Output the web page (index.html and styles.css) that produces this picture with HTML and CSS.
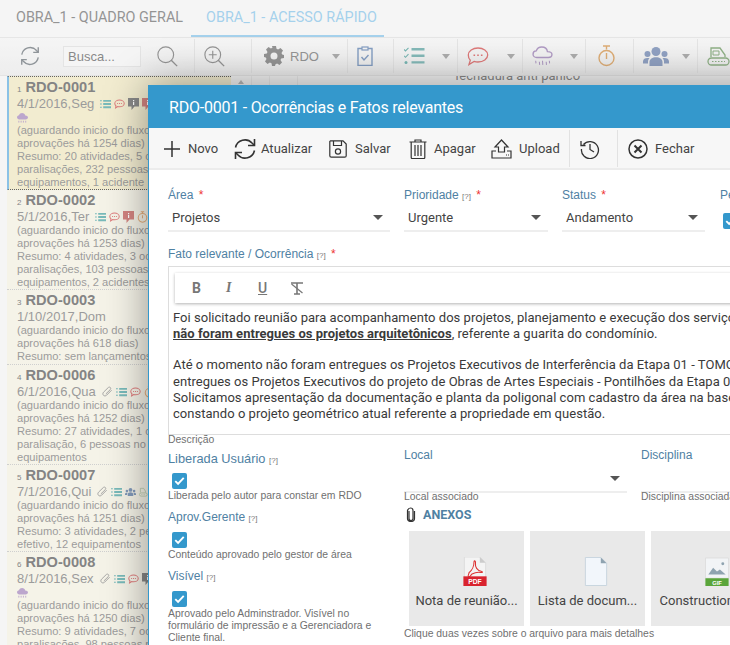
FILE: index.html
```html
<!DOCTYPE html>
<html lang="pt">
<head>
<meta charset="utf-8">
<title>RDO-0001</title>
<link rel="stylesheet" href="styles.css">
</head>
<body>
<svg class="defs" width="0" height="0">
  <symbol id="i-list" viewBox="0 0 12 10"><path d="M0 1h2v1H0zM0 4.500h2v1H0zM0 8h2v1H0z" fill="#3e9c9d"/><path d="M3.500.5H12v2H3.500zM3.500 4H12v2H3.500zM3.500 7.500H12v2H3.500z" fill="#3e9c9d"/></symbol>
  <symbol id="i-chat" viewBox="0 0 14 12"><path d="M7 1c3.300 0 6 1.900 6 4.300S10.300 9.600 7 9.600c-.8 0-1.600-.1-2.300-.3L2 11l.5-2.700C1.600 7.500 1 6.500 1 5.300 1 2.900 3.700 1 7 1z" fill="none" stroke="#d04545" stroke-width="1.300"/><path d="M4 4.800h1.200V6H4zM6.400 4.800h1.200V6H6.400zM8.800 4.800H10V6H8.800z" fill="#d04545"/></symbol>
  <symbol id="i-note" viewBox="0 0 11 12"><path d="M0 0h11v8.500H6.500L3.500 12V8.500H0z" fill="currentColor"/><path d="M5 2h1.200v1.200H5zM5 4h1.200v3H5z" fill="#fff"/></symbol>
  <symbol id="i-timer" viewBox="0 0 12 14"><path d="M4 .8h4M6 .8v2.400" stroke="#d88c45" fill="none" stroke-width="1.200"/><circle cx="6" cy="8" r="5" fill="none" stroke="#d88c45" stroke-width="1.200"/><path d="M6 5v3.500" stroke="#d88c45" stroke-width="1.200"/></symbol>
  <symbol id="i-cloud" viewBox="0 0 12 11"><path d="M2.500 7C1.100 7 0 6 0 4.700s1-2.200 2.200-2.300C2.700 1 4 0 5.500 0c1.800 0 3.200 1.200 3.500 2.700 1.700 0 3 1 3 2.200S10.800 7 9.500 7z" fill="#a080b8"/><path d="M2 8.500v2M4.500 8.500v2M7 8.500v2M9.500 8.500v2" stroke="#a080b8" fill="none"/></symbol>
  <symbol id="i-clip" viewBox="0 0 12 12"><path d="M10.500 4 5 9.500c-1 1-2.500 1-3.400.1s-.9-2.400.1-3.400L6.800 1.200c.7-.7 1.700-.7 2.300-.1s.6 1.600-.1 2.300L4.200 8.100" fill="none" stroke="#777" stroke-width="1"/></symbol>
  <symbol id="i-users" viewBox="0 0 26 19"><circle cx="13" cy="4.500" r="4.500" fill="currentColor"/><circle cx="4.500" cy="7" r="3" fill="currentColor"/><circle cx="21.500" cy="7" r="3" fill="currentColor"/><path d="M6.500 19v-4c0-3 3-4.800 6.500-4.800s6.500 1.800 6.500 4.800v4zM0 16.500v-2C0 12 2 11 4.500 11c.8 0 1.300.1 2 .3-1 .9-1.500 2-1.500 3.400v1.800zM26 16.500v-2C26 12 24 11 21.500 11c-.8 0-1.300.1-2 .3 1 .9 1.500 2 1.500 3.400v1.800z" fill="currentColor"/></symbol>
  <symbol id="i-dozer" viewBox="0 0 24 20"><path d="M3 11V2h7l4 6v3" fill="none" stroke="#6f9a62" stroke-width="1.200"/><rect x="1" y="12" width="17" height="7" rx="3.500" fill="none" stroke="#6f9a62" stroke-width="1.200"/><path d="M5 15.500h9" stroke="#6f9a62" stroke-dasharray="1.500 1.500"/></symbol>
</svg>

<div class="app">
  <nav class="tabs">
    <span class="tab">OBRA_1 - QUADRO GERAL</span>
    <span class="tab active">OBRA_1 - ACESSO RÁPIDO</span>
  </nav>
  <div class="toolbar">
    <div class="cell c-search">
      <svg class="refresh" viewBox="0 0 24 24"><path d="M3 10.500A9.200 9.200 0 0 1 19 6l2 2M21 13.500A9.200 9.200 0 0 1 5 18l-2-2" fill="none" stroke="#5f676e" stroke-width="1.500"/><path d="M21 2.500V8h-5.500M3 21.500V16h5.500" fill="none" stroke="#5f676e" stroke-width="1.500"/></svg>
      <input class="search" placeholder="Busca..." readonly>
      <svg class="lens" viewBox="0 0 24 24"><circle cx="10" cy="10" r="9" fill="none" stroke="#666" stroke-width="1.300"/><path d="m16 16 7 7" stroke="#666" stroke-width="1.600"/></svg>
    </div>
    <div class="cell c-zoom">
      <svg class="lens" viewBox="0 0 24 24"><circle cx="10" cy="10" r="9" fill="none" stroke="#666" stroke-width="1.300"/><path d="m16 16 7 7" stroke="#666" stroke-width="1.600"/><path d="M10 5.500v9M5.500 10h9" stroke="#666" stroke-width="1.300"/></svg>
    </div>
    <div class="cell c-rdo">
      <svg class="gear" viewBox="0 0 20 20"><path fill="#666" fill-rule="evenodd" d="M8 0h4l.5 2.800 1.600.7L16.500 2 19 4.500l-1.500 2.400.7 1.600L20 9v3l-2.800.5-.7 1.600 1.500 2.400-2.500 2.500-2.400-1.500-1.600.7L11 20H8l-.5-2.800-1.600-.7L3.500 18 1 15.500l1.500-2.400-.7-1.600L0 11V8l2.800-.5.7-1.600L2 3.500 4.500 1l2.400 1.500 1.600-.7zM10 6.500a3.500 3.500 0 1 0 0 7 3.500 3.500 0 0 0 0-7z"/></svg>
      <span class="rdo">RDO</span><i class="caret"></i>
    </div>
    <div class="cell c-clip">
      <svg class="board" viewBox="0 0 16 20"><path d="M5 2.500H1v17h14v-17h-4" fill="none" stroke="#4f74a8" stroke-width="1.400"/><rect x="5" y="1" width="6" height="3" fill="none" stroke="#4f74a8" stroke-width="1.200"/><path d="m4.500 11 2.500 3 4.500-5" fill="none" stroke="#4f74a8" stroke-width="1.400"/></svg>
    </div>
    <div class="cell c-w64">
      <svg class="check" viewBox="0 0 21 18"><path d="M0 2.500 1.500 4 4.500.8M0 8.800l1.500 1.500 3-3.200" fill="none" stroke="#3e9792" stroke-width="1.100"/><circle cx="2" cy="15.500" r="1.500" fill="#3e9792"/><path d="M7.500 1h13v2.400h-13zM7.500 7.600h13V10h-13zM7.500 14.200h13v2.400h-13z" fill="#4f9b9a"/></svg>
      <i class="caret"></i>
    </div>
    <div class="cell c-w65">
      <svg class="chat" viewBox="0 0 22 19"><path d="M11 1c5.300 0 9.700 3 9.700 7s-4.400 7-9.700 7c-1.400 0-2.700-.2-3.900-.6L2 17.500l1.300-4.300C2 12 1.300 10.100 1.300 8 1.300 4 5.700 1 11 1z" fill="none" stroke="#cf4040" stroke-width="1.300"/><path d="M6.500 7.400h1.600V9H6.500zM10.200 7.400h1.600V9h-1.600zM13.900 7.400h1.600V9h-1.600z" fill="#cf4040"/></svg>
      <i class="caret"></i>
    </div>
    <div class="cell c-w63">
      <svg class="rain" viewBox="0 0 20 20"><path d="M4.500 11C2.500 11 1 9.600 1 7.800S2.500 4.800 4 4.700C4.800 2.500 6.800 1 9.300 1c2.800 0 5 1.900 5.400 4.300 2.500 0 4.300 1.200 4.300 2.900S17.400 11 15.500 11z" fill="none" stroke="#8f70ab" stroke-width="1.300"/><path d="m3.500 14 .3 2.500M7 15l.3 3M10 14l.3 4M13.500 15l.3 3M16.500 14l.3 2.500" fill="none" stroke="#8f70ab"/></svg>
      <i class="caret"></i>
    </div>
    <div class="cell c-w48">
      <svg class="timer" viewBox="0 0 17 22"><path d="M5 1h7M8.500 1v3.500" stroke="#d08a3a" stroke-width="1.400" fill="none"/><circle cx="8.500" cy="13" r="7.500" fill="none" stroke="#d08a3a" stroke-width="1.400"/><path d="M8.500 8v6" stroke="#d08a3a" stroke-width="1.400"/></svg>
    </div>
    <div class="cell c-w64b">
      <svg class="users"><use href="#i-users"/></svg>
      <i class="caret"></i>
    </div>
    <div class="cell c-last">
      <svg class="dozer" viewBox="0 0 34 20"><path d="M4 11V2h9l5 7v2" fill="none" stroke="#5f8f52" stroke-width="1.300"/><path d="M6 5h6v4H6z" fill="none" stroke="#5f8f52"/><rect x="1" y="12" width="21" height="7" rx="3.500" fill="none" stroke="#5f8f52" stroke-width="1.300"/><path d="M5 15.500h13" stroke="#5f8f52" stroke-dasharray="1.500 1.500"/><path d="M24 5c3 0 6 1 7 3v10h-3" fill="none" stroke="#5f8f52" stroke-width="1.300"/></svg>
    </div>
  </div>

  <div class="workspace">
    <aside class="list">
      <article class="row selected">
        <h3><small>1</small> RDO-0001</h3>
        <p class="date">4/1/2016,Seg
          <svg class="ri"><use href="#i-list"/></svg>
          <svg class="ri"><use href="#i-chat"/></svg>
          <svg class="ri note-g"><use href="#i-note"/></svg>
          <svg class="ri note-r"><use href="#i-note"/></svg>
        </p>
        <p class="icons"><svg class="ri"><use href="#i-cloud"/></svg></p>
        <p>(aguardando inicio do fluxo de</p>
        <p>aprovações há 1254 dias)</p>
        <p>Resumo: 20 atividades, 5 ocorrências,</p>
        <p>paralisações, 232 pessoas no efetivo,</p>
        <p>equipamentos, 1 acidente</p>
      </article>
      <article class="row">
        <h3><small>2</small> RDO-0002</h3>
        <p class="date">5/1/2016,Ter
          <svg class="ri"><use href="#i-list"/></svg>
          <svg class="ri"><use href="#i-chat"/></svg>
          <svg class="ri note-r"><use href="#i-note"/></svg>
          <svg class="ri"><use href="#i-timer"/></svg>
        </p>
        <p>(aguardando inicio do fluxo de</p>
        <p>aprovações há 1253 dias)</p>
        <p>Resumo: 4 atividades, 3 ocorrências,</p>
        <p>paralisações, 103 pessoas no efetivo,</p>
        <p>equipamentos, 2 acidentes</p>
      </article>
      <article class="row row-short">
        <h3><small>3</small> RDO-0003</h3>
        <p class="date">1/10/2017,Dom</p>
        <p>(aguardando inicio do fluxo de</p>
        <p>aprovações há 618 dias)</p>
        <p>Resumo: sem lançamentos</p>
      </article>
      <article class="row">
        <h3><small>4</small> RDO-0006</h3>
        <p class="date">6/1/2016,Qua
          <svg class="ri"><use href="#i-clip"/></svg>
          <svg class="ri"><use href="#i-list"/></svg>
          <svg class="ri"><use href="#i-chat"/></svg>
          <svg class="ri"><use href="#i-timer"/></svg>
        </p>
        <p>(aguardando inicio do fluxo de</p>
        <p>aprovações há 1252 dias)</p>
        <p>Resumo: 27 atividades, 1 ocorrência,</p>
        <p>paralisação, 6 pessoas no efetivo,</p>
        <p>equipamentos</p>
      </article>
      <article class="row">
        <h3><small>5</small> RDO-0007</h3>
        <p class="date">7/1/2016,Qui
          <svg class="ri"><use href="#i-clip"/></svg>
          <svg class="ri"><use href="#i-list"/></svg>
          <svg class="ri u-b"><use href="#i-users"/></svg>
          <svg class="ri"><use href="#i-dozer"/></svg>
        </p>
        <p>(aguardando inicio do fluxo de</p>
        <p>aprovações há 1251 dias)</p>
        <p>Resumo: 3 atividades, 2 pessoas no</p>
        <p>efetivo, 12 equipamentos</p>
      </article>
      <article class="row">
        <h3><small>6</small> RDO-0008</h3>
        <p class="date">8/1/2016,Sex
          <svg class="ri"><use href="#i-clip"/></svg>
          <svg class="ri"><use href="#i-list"/></svg>
          <svg class="ri"><use href="#i-chat"/></svg>
          <svg class="ri note-g"><use href="#i-note"/></svg>
        </p>
        <p class="icons"><svg class="ri"><use href="#i-cloud"/></svg></p>
        <p>(aguardando inicio do fluxo de</p>
        <p>aprovações há 1250 dias)</p>
        <p>Resumo: 9 atividades, 7 ocorrências,</p>
        <p>paralisações, 98 pessoas no efetivo</p>
      </article>
    </aside>
    <div class="grip">
      <i class="grip-up"></i>
    </div>
    <main class="detail">
      <div class="col col-a"></div>
      <div class="col col-b"></div>
      <div class="col col-c"><p class="behind">fechadura anti pânico</p></div>
    </main>
  </div>
</div>

<div class="scrim"></div>

<section class="modal">
  <header class="m-head">RDO-0001 - Ocorrências e Fatos relevantes</header>
  <div class="m-tools">
    <button class="tool t-novo"><svg viewBox="0 0 16 16"><path d="M8 0v16M0 8h16" stroke="#333" stroke-width="1.500" fill="none"/></svg>Novo</button>
    <button class="tool t-atu"><svg viewBox="0 0 22 22"><path d="M1.500 9.500A9.700 9.700 0 0 1 18 5l2 2M20.500 12.500A9.700 9.700 0 0 1 4 17l-2-2" fill="none" stroke="#333" stroke-width="1.600"/><path d="M20.500 1v6.500H14M1.500 21v-6.500H8" fill="none" stroke="#333" stroke-width="1.600"/></svg>Atualizar</button>
    <button class="tool t-sal"><svg viewBox="0 0 18 18"><path d="M1.500.8h12.500L17.200 4v11.700c0 .8-.7 1.500-1.500 1.500H2.300c-.8 0-1.500-.7-1.500-1.500V1.500z" fill="none" stroke="#333" stroke-width="1.200"/><path d="M4.500 1v4.500h8V1" fill="none" stroke="#333" stroke-width="1.200"/><circle cx="9" cy="11.500" r="2.600" fill="none" stroke="#333" stroke-width="1.200"/></svg>Salvar</button>
    <button class="tool t-apa"><svg class="bin" viewBox="0 0 18 20"><path d="M.5 3h17M6 3V1h6v2M2.200 3v15.500c0 .5.400 1 1 1h11.600c.6 0 1-.5 1-1V3M6 6v11M9 6v11M12 6v11" fill="none" stroke="#333" stroke-width="1.200"/></svg>Apagar</button>
    <button class="tool t-upl"><svg class="upl" viewBox="0 0 21 20"><path d="M10.500 1 4 8h3.500v5h6V8H17zM5 12H1v7h19v-7h-4" fill="none" stroke="#333" stroke-width="1.200"/><path d="M15 16h1M17 16h1" stroke="#333"/></svg>Upload</button>
    <button class="tool t-his"><svg class="his" viewBox="0 0 20 20"><path d="M3.500 5.500A8.500 8.500 0 1 1 1.500 10M1 2v4.500h4.500" fill="none" stroke="#333" stroke-width="1.300"/><path d="M10 5v5.500l4 2.500" fill="none" stroke="#333" stroke-width="1.300"/></svg></button>
    <button class="tool t-fec"><svg class="fec" viewBox="0 0 20 20"><circle cx="10" cy="10" r="9" fill="none" stroke="#333" stroke-width="1.500"/><path d="m6.500 6.500 7 7M13.500 6.500l-7 7" stroke="#333" stroke-width="2"/></svg>Fechar</button>
  </div>

  <div class="m-body">
    <div class="fields">
      <div class="field f-area">
        <label>Área <b>*</b></label>
        <div class="select"><span>Projetos</span><i class="arrow"></i></div>
      </div>
      <div class="field f-pri">
        <label>Prioridade <em>[?]</em> <b>*</b></label>
        <div class="select"><span>Urgente</span><i class="arrow"></i></div>
      </div>
      <div class="field f-sta">
        <label>Status <b>*</b></label>
        <div class="select"><span>Andamento</span><i class="arrow"></i></div>
      </div>
      <div class="field f-pen">
        <label>Pendente</label>
        <span class="cb"><svg viewBox="0 0 16 16"><path d="m3.500 8.200 3 3 6-6.500" fill="none" stroke="#fff" stroke-width="2"/></svg></span>
      </div>
    </div>

    <label class="l-fato">Fato relevante / Ocorrência <em>[?]</em> <b>*</b></label>
    <div class="editor">
      <div class="e-tools">
        <span class="e-b">B</span><span class="e-i">I</span><span class="e-u">U</span>
        <svg class="e-x" viewBox="0 0 14 13"><path d="M1 1h12M7 1v11M4 12h6" fill="none" stroke="#777" stroke-width="1.600"/><path d="m1.500 2 11 9" stroke="#777" stroke-width="1.200"/></svg>
      </div>
      <div class="e-text">
        <p>Foi solicitado reunião para acompanhamento dos projetos, planejamento e execução dos serviços</p>
        <p class="gap"><strong>não foram entregues os projetos arquitetônicos</strong>, referente a guarita do condomínio.</p>
        <p>Até o momento não foram entregues os Projetos Executivos de Interferência da Etapa 01 - TOMO</p>
        <p>entregues os Projetos Executivos do projeto de Obras de Artes Especiais - Pontilhões da Etapa 01</p>
        <p>Solicitamos apresentação da documentação e planta da poligonal com cadastro da área na base</p>
        <p>constando o projeto geométrico atual referente a propriedade em questão.</p>
      </div>
    </div>
    <div class="hint desc">Descrição</div>

    <div class="lower">
      <div class="checks">
        <div class="chk chk-first">
          <label>Liberada Usuário <em>[?]</em></label>
          <span class="cb"><svg viewBox="0 0 16 16"><path d="m3.500 8.200 3 3 6-6.500" fill="none" stroke="#fff" stroke-width="2"/></svg></span>
          <div class="hint">Liberada pelo autor para constar em RDO</div>
        </div>
        <div class="chk">
          <label>Aprov.Gerente <em>[?]</em></label>
          <span class="cb"><svg viewBox="0 0 16 16"><path d="m3.500 8.200 3 3 6-6.500" fill="none" stroke="#fff" stroke-width="2"/></svg></span>
          <div class="hint">Conteúdo aprovado pelo gestor de área</div>
        </div>
        <div class="chk">
          <label>Visível <em>[?]</em></label>
          <span class="cb"><svg viewBox="0 0 16 16"><path d="m3.500 8.200 3 3 6-6.500" fill="none" stroke="#fff" stroke-width="2"/></svg></span>
          <div class="hint">Aprovado pelo Adminstrador. Visível no formulário de impressão e a Gerenciadora e Cliente final.</div>
        </div>
      </div>
      <div class="attach">
        <div class="pair">
          <div class="field f-local">
            <label>Local</label>
            <div class="select"><span></span><i class="arrow"></i></div>
            <div class="hint">Local associado</div>
          </div>
          <div class="field f-disc">
            <label>Disciplina</label>
            <div class="select"><span></span></div>
            <div class="hint">Disciplina associada</div>
          </div>
        </div>
        <h4 class="anexos"><svg viewBox="0 0 10 15"><path d="M3 4v7.500c0 1.100.9 2 2 2s2-.9 2-2V3.500C7 2 6 1 4.500 1S2 2 1.500 3.500v8c0 2 1.500 3 3.500 3s3.500-1 3.500-3V4" fill="none" stroke="#333" stroke-width="1.200"/></svg>ANEXOS</h4>
        <div class="cards">
          <div class="card">
            <svg class="doc" viewBox="0 0 24 30"><path d="M1 0h16l6 6v24H1z" fill="#f4f4f4" stroke="#ddd"/><path d="M17 0v6h6z" fill="#ccc"/><path d="M6 16c3-2 5-7 5-11 0-2 2-1 1.500 2C12 10 14 14 19 15c1 .2 1 1.500-1 1-3-.5-6 0-9 1.500-2 2-3 4-4 2.500-.5-1 1-3 1-4.500z" fill="none" stroke="#d33" stroke-width="1.100"/><rect x="0" y="20" width="24" height="10" fill="#d9232e"/><text x="12" y="28" text-anchor="middle" class="doc-t">PDF</text></svg>
            <span>Nota de reunião...</span>
          </div>
          <div class="card">
            <svg class="doc" viewBox="0 0 24 30"><path d="M1 .5h16l6 6v23H1z" fill="#f2f6fb" stroke="#c8d4de"/><path d="M17 .5v6h6z" fill="#8fa3b0"/></svg>
            <span>Lista de docum...</span>
          </div>
          <div class="card">
            <svg class="doc" viewBox="0 0 24 30"><path d="M0 1h24v21H0z" fill="#f2f4f6" stroke="#ddd"/><path d="M3 18l5-7 4 4 3-2 6 5z" fill="#8fa3b0"/><circle cx="18" cy="7" r="1.500" fill="#8fa3b0"/><rect x="0" y="22" width="24" height="8" fill="#5aa53a"/><text x="12" y="29" text-anchor="middle" class="doc-t small">GIF</text></svg>
            <span>Construction_0...</span>
          </div>
        </div>
        <div class="hint">Clique duas vezes sobre o arquivo para mais detalhes</div>
      </div>
    </div>
  </div>
</section>
</body>
</html>
```

FILE: styles.css
```css
* { box-sizing: border-box; }
html, body { margin: 0; height: 645px; overflow: hidden; }
body { background: #f1f1f1; font-family: "Liberation Sans", Arial, sans-serif; position: relative; width: 730px; }
.defs { position: absolute; }
p, h3, h4 { margin: 0; font-weight: normal; }

.app { height: 645px; display: flex; flex-direction: column; isolation: isolate; }
.tabs { height: 38px; display: flex; border-bottom: 1px solid #dcdcdc; font: 14.4px Roboto, sans-serif; color: #666; padding-left: 4px; flex: none; }
.tab { padding: 9px 8px 0 12px; height: 37px; white-space: nowrap; }
.tab.active { color: #7ebde4; border-bottom: 2px solid #7ebde4; padding-left: 15px; width: 193px; }

.toolbar { height: 38px; flex: none; display: flex; padding-top: 1px; border-bottom: 1px solid #d8d8d8; background: linear-gradient(#f1f1f1, #e6e6e6); position: relative; z-index: 1; }
.cell { display: flex; align-items: center; height: 34px; border-right: 1px solid #d8d8d8; padding-left: 8px; flex: none; position: relative; }
.c-search { width: 195px; padding-left: 19px; }
.refresh { width: 22px; height: 22px; }
.search { width: 78px; height: 21px; margin-left: 22px; border: 1px solid #d8d8d8; background: #f1f1f1; font: 13px "Liberation Sans", sans-serif; padding: 0 4px; color: #555; }
.search::placeholder { color: #555; opacity: 1; }
.lens { width: 21px; height: 21px; }
.c-search .lens { margin-left: 16px; }
.c-zoom { width: 57px; padding-left: 9px; }
.c-rdo { width: 96px; padding-left: 12px; }
.gear { width: 20px; height: 20px; }
.rdo { font: 13px "Liberation Sans", sans-serif; color: #666; margin-left: 6px; }
.caret { border: 4px solid transparent; border-top: 5px solid #888; border-bottom: 0; display: block; position: absolute; right: 7px; top: 15px; }
.c-clip { width: 46px; padding-left: 9px; }
.board { width: 16px; height: 20px; }
.c-w64 { width: 64px; padding-left: 10px; }
.check { width: 21px; height: 18px; }
.c-w65 { width: 65px; padding-left: 9px; }
.chat { width: 22px; height: 19px; }
.c-w63 { width: 63px; padding-left: 9px; }
.rain { width: 21px; height: 21px; }
.c-w48 { width: 48px; padding-left: 12px; }
.timer { width: 17px; height: 22px; }
.c-w64b { width: 64px; padding-left: 9px; }
.users { width: 26px; height: 19px; color: #6079a8; }
.c-last { border: 0; padding-left: 9px; }
.dozer { width: 34px; height: 20px; }

.workspace { flex: 1; display: flex; min-height: 0; padding-left: 7px; }
.list { width: 224px; flex: none; }
.row { background: #f1eede; border-bottom: 1px dotted #bbb; padding: 2px 0 0 10px; font-size: 11.1px; line-height: 13px; color: #707070; white-space: nowrap; }
.row.selected { background: #ece4bc; border-left: 2px solid #5aa8dc; border-top: 1px dotted #222; border-bottom: 1px dotted #222; padding-left: 8px; }
.row-short { padding-bottom: 1px; }
.row h3 { font-size: 14.6px; font-weight: bold; line-height: 17px; color: #4f4f4f; }
.row small { font-size: 8px; font-weight: normal; line-height: 1; }
.date { font-size: 13px; line-height: 15px; display: flex; align-items: center; gap: 3px; }
.date svg:first-of-type { margin-left: 3px; }
.icons { height: 13px; display: flex; align-items: center; }
.ri { width: 11px; height: 12px; flex: none; color: #555; }
.note-g { color: #555; }
.note-r { color: #c04f4a; }
.u-b { color: #4d6f9c; }

.grip { width: 20px; flex: none; position: relative; }
.grip-up { position: absolute; left: 7px; top: 4px; border: 3px solid transparent; border-bottom: 4px solid #999; border-top: 0; }
.detail { flex: 1; display: flex; border-left: 1px solid #e0e0e0; min-width: 0; }
.col { height: 10px; border-right: 1px solid #e0e0e0; }
.col-a { width: 18px; }
.col-b { width: 28px; }
.col-c { flex: 1; border: 0; }
.behind { font: 13px/15px Roboto, sans-serif; color: #555; padding-left: 157px; margin-top: -8px; white-space: nowrap; }

.scrim { position: absolute; inset: 0; background: rgba(255, 255, 255, .3); }

.modal { position: absolute; left: 148px; top: 85px; width: 720px; height: 640px; background: #fff; border-left: 1px solid #3498cc; box-shadow: 0 0 40px rgba(0, 0, 0, .4); font-family: Roboto, sans-serif; }
.m-head { height: 43px; background: #3498cc; color: #fff; font-size: 16px; line-height: 46px; padding-left: 20px; letter-spacing: -.22px; }
.m-tools { height: 42px; background: #f7f7f7; border-bottom: 2px solid #ececec; display: flex; padding-top: 2px; }
.tool { border: 0; background: none; display: flex; align-items: center; font: 13px Roboto, sans-serif; color: #444; padding: 0; height: 37px; flex: none; }
.tool svg { width: 16px; height: 16px; margin-right: 8px; }
.t-novo { width: 85px; padding-left: 15px; }
.t-atu { width: 95px; }
.t-atu svg { width: 22px; height: 22px; margin-right: 5px; }
.t-sal { width: 80px; }
.t-sal svg { width: 18px; height: 18px; margin-right: 8px; }
.t-apa { width: 82px; }
.t-apa svg { width: 18px; height: 20px; margin-right: 7px; }
.t-upl { width: 79px; border-right: 1px solid #e2e2e2; }
.t-upl svg { width: 21px; height: 20px; margin-right: 7px; }
.t-his { width: 48px; padding-left: 10px; border-right: 1px solid #e2e2e2; }
.t-his svg { width: 20px; height: 20px; }
.t-fec { padding-left: 10px; }
.t-fec svg { width: 20px; height: 20px; margin-right: 7px; }

.m-body { padding: 18px 0 0 19px; width: 582px; }
label { display: block; font: 12px/15px "Liberation Sans", sans-serif; color: #4f81a3; white-space: nowrap; }
label b { color: #e33; font-weight: normal; margin-left: 2px; line-height: 1; }
label em { font-size: 8px; line-height: 1; font-style: normal; color: #777; }
.fields { display: flex; gap: 14px; width: 600px; }
.select { height: 28px; border-bottom: 2px solid #eee; display: flex; align-items: center; justify-content: space-between; padding: 0 7px 0 4px; font-size: 13px; color: #444; margin-top: 1px; }
.arrow { border: 5px solid transparent; border-top: 5px solid #555; border-bottom: 0; }
.f-area { width: 222px; }
.f-pri { width: 144px; }
.f-sta { width: 143px; }
.f-pen { width: 40px; margin-left: 1px; }
.f-pen .cb { margin: 10px 0 0 3px; }

.cb { display: block; width: 15px; height: 16px; border-radius: 2px; background: #3498cc; margin-left: 4px; }
.cb svg { display: block; width: 15px; height: 16px; }

.l-fato { margin-top: 15px; }
.editor { margin-top: 4px; width: 600px; height: 169px; border: 1px solid #ddd; border-right: 0; padding: 6px 0 0 6px; overflow: hidden; }
.e-tools { height: 30px; display: flex; align-items: center; box-shadow: 0 1px 3px rgba(0, 0, 0, .3); padding-left: 17px; font-size: 14px; color: #777; }
.e-b { font-weight: bold; width: 34px; }
.e-i { font: italic bold 14px "Liberation Serif", serif; width: 32px; }
.e-u { text-decoration: underline; font-weight: 500; width: 32px; }
.e-x { width: 14px; height: 13px; }
.e-text { font-size: 13px; line-height: 16px; letter-spacing: .03px; color: #3a3a3a; margin: 7px 0 0 -2px; white-space: nowrap; }
.e-text p { height: 16.2px; }
.e-text .gap { margin-bottom: 15px; }
.e-text strong { text-decoration: underline; font-weight: bold; }

.hint { font: 10.4px/12px "Liberation Sans", sans-serif; color: #707070; }
.desc { margin-top: -1px; }
.lower { display: flex; gap: 21px; width: 600px; margin-top: 5px; }
.checks { width: 215px; flex: none; }
.chk-first label { font-size: 12.8px; }
.chk .cb { margin-top: 7px; }
.chk .hint { margin-top: 1px; margin-bottom: 8px; }
.attach { flex: 1; min-width: 0; }
.pair { display: flex; gap: 14px; margin-top: -3px; }
.pair .field { flex: none; }
.f-local { width: 223px; }
.f-disc { width: 200px; }
.pair .select { margin-top: 2px; }
.pair .hint { margin-top: -2px; }
.anexos { display: flex; align-items: center; font: bold 12.5px/14px Roboto, sans-serif; color: #4f81a3; margin-top: 4px; padding-left: 2px; }
.anexos svg { width: 10px; height: 15px; margin-right: 7px; }
.cards { display: flex; gap: 6px; margin: 9px 0 2px 5px; }
.card { width: 115px; height: 95px; flex: none; background: #e9e9e9; display: flex; flex-direction: column; align-items: center; padding-top: 26px; font-size: 13px; color: #444; white-space: nowrap; }
.doc { width: 24px; height: 29px; margin-left: 16px; }
.card span { margin-top: 7px; }
.doc-t { font: bold 7px "Liberation Sans", sans-serif; fill: #fff; }
.doc-t.small { font-size: 6px; }
```
